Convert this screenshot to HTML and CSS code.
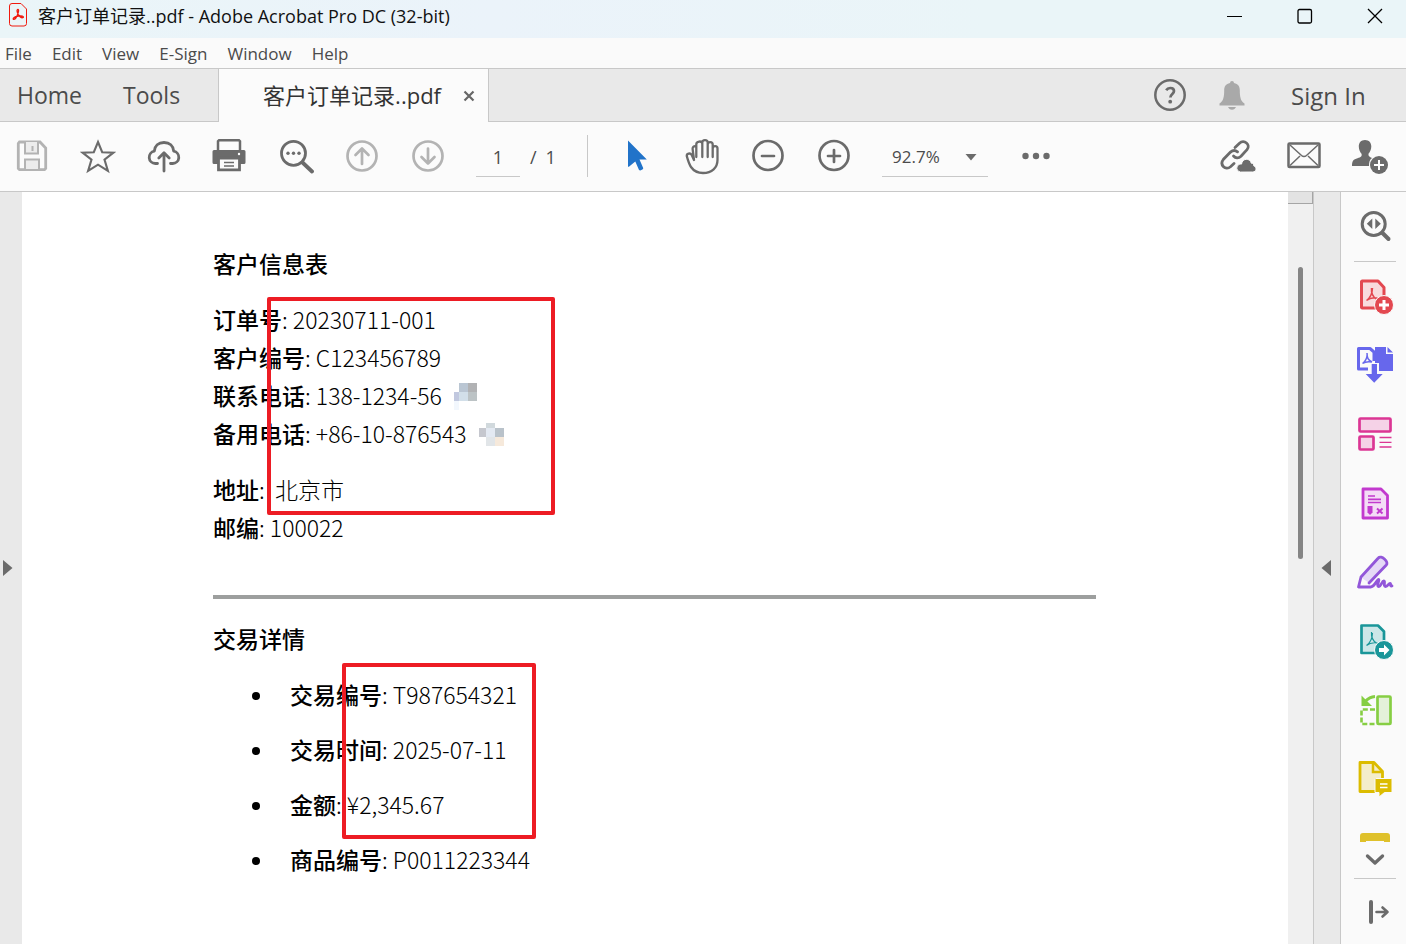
FILE: index.html
```html
<!DOCTYPE html>
<html lang="en">
<head>
<meta charset="utf-8">
<title>客户订单记录..pdf - Adobe Acrobat Pro DC (32-bit)</title>
<link rel="stylesheet" href="styles.css">
</head>
<body>
<div class="app">
  <header class="titlebar">
    <svg class="app-icon" width="20" height="26" viewBox="0 0 20 26" fill="none" stroke="#f01a0e"><path d="M4 1.500h9l5.500 5.500v14.500a2.500 2.500 0 0 1-2.500 2.500h-12a2.500 2.500 0 0 1-2.500-2.500v-17.500a2.500 2.500 0 0 1 2.500-2.500z"/><path stroke-width="1.300" d="M10 7.500c-1.600 0-.9 2.700.2 4.800 1.200 2 3.200 3.600 4.500 3.400 1.500-.4.600-2-2.200-1.900-2.600.1-6.500 1.300-7.200 2.600-.5 1.500 1.500 1.400 2.700-.5 1.400-2.100 3.600-8.400 2-8.400z"/></svg>
    <h1 class="title">客户订单记录..pdf - Adobe Acrobat Pro DC (32-bit)</h1>
    <div class="window-buttons">
      <button aria-label="Minimize"><svg width="16" height="16" viewBox="0 0 16 16"><path d="M0 8.500h15" stroke="#000"/></svg></button>
      <button aria-label="Maximize"><svg width="16" height="16" viewBox="0 0 16 16"><rect x="1" y="1.500" width="13.500" height="13.500" rx="1.500" fill="none" stroke="#000" stroke-width="1.300"/></svg></button>
      <button aria-label="Close"><svg width="16" height="16" viewBox="0 0 16 16"><path d="M1 1l14 14M15 1L1 15" stroke="#000" stroke-width="1.300"/></svg></button>
    </div>
  </header>

  <nav class="menubar" aria-label="Menu">
    <button>File</button><button>Edit</button><button>View</button><button>E-Sign</button><button>Window</button><button>Help</button>
  </nav>

  <div class="tabs">
    <div class="tabs-main"><button>Home</button><button>Tools</button></div>
    <div class="tab-active">
      <button class="tab-name">客户订单记录..pdf</button>
      <button class="tab-close" aria-label="Close tab"><svg width="12" height="12" viewBox="0 0 12 12"><path d="M1.500 1.500l9 9M10.500 1.500l-9 9" stroke="#666" stroke-width="2.200"/></svg></button>
    </div>
    <div class="tabs-account">
      <button aria-label="Help"><svg width="34" height="34" viewBox="0 0 34 34" fill="none" stroke="#6b6b6b"><circle cx="17" cy="17" r="14.700" stroke-width="2.500"/><path d="M13.200 12.200c1-1.600 2.300-2.200 4-2.200 2.300 0 3.800 1.300 3.800 3.100 0 2.700-3.600 3-3.600 6.300" stroke-width="2.700"/><circle cx="17.200" cy="23.700" r="1.900" fill="#6b6b6b" stroke="none"/></svg></button>
      <button aria-label="Notifications"><svg width="26" height="34" viewBox="0 0 26 34" fill="#a9a9a9"><path d="M11 5a2 2 0 0 1 4 0c4.200.8 5.800 3.600 5.800 7.200 0 6.200.7 10.800 4.700 13.300v2H.5v-2c4-2.500 4.700-7.100 4.700-13.300C5.200 8.600 6.800 5.800 11 5zM9 29h8c-.8 1.600-2 2.700-4 2.700S9.800 30.600 9 29z"/></svg></button>
      <button class="sign-in">Sign In</button>
    </div>
  </div>

  <div class="toolbar" role="toolbar" aria-label="Page tools">
    <button disabled aria-label="Save"><svg viewBox="0 0 36 38" fill="none" stroke="#b3b3b3" stroke-width="2.800"><path d="M5.500 5h20.500l5.700 6v20.500l-1.200 1.200h-25l-1.200-1.200v-25z"/><path fill="#ececec" stroke-width="2" d="M11 5v11.500h13V5M11 32V22.500h14V32"/><path d="M18.500 9v5" stroke-width="2"/></svg></button>
    <button aria-label="Star"><svg viewBox="0 0 36 38" fill="none" stroke="#6b6b6b" stroke-width="2.100"><path d="M18 5l4.200 10.200 11.200.4-8.900 7 3.400 11.300L18 27.700 8.100 33.900l3.400-11.300-8.900-7 11.200-.4z"/></svg></button>
    <button aria-label="Share to cloud"><svg viewBox="0 0 36 38" fill="none" stroke="#6b6b6b" stroke-width="2.800" stroke-linecap="round" stroke-linejoin="round"><path d="M11.500 26.500H9.300a6.200 6.200 0 0 1-1-12.300C8.700 8.700 12.400 5.500 18 5.500s9.300 3.200 9.700 8.700a6.200 6.200 0 0 1-1 12.300h-2.200"/><path d="M18 34V16M12.800 21l5.200-5.200 5.200 5.200"/></svg></button>
    <button aria-label="Print"><svg viewBox="0 0 36 38" fill="none" stroke="#6b6b6b"><path d="M6 14V4.200L7 3.300h20l1 .9V14" stroke-width="2.500"/><path d="M2 13h30a1.500 1.500 0 0 1 1.500 1.500v11a1.500 1.500 0 0 1-1.500 1.500H2a1.500 1.500 0 0 1-1.500-1.500v-11A1.500 1.500 0 0 1 2 13z" fill="#6b6b6b" stroke="none"/><path d="M6.500 21h21v11.800h-21z" fill="#fbfbfb" stroke-width="2.800"/><path d="M12 25.500h10M12 29h10" stroke-width="1.500"/><circle cx="27" cy="17" r="1.200" fill="#fff" stroke="none"/></svg></button>
    <button aria-label="Find"><svg viewBox="0 0 36 38" fill="none" stroke="#6b6b6b"><circle cx="15.500" cy="16.300" r="12" stroke-width="2.800"/><path d="M24.500 25.500l9.500 9" stroke-width="3.800" stroke-linecap="round"/><g fill="#6b6b6b" stroke="none"><circle cx="10" cy="16.300" r="1.700"/><circle cx="15.500" cy="16.300" r="1.700"/><circle cx="21" cy="16.300" r="1.700"/></g></svg></button>
    <button disabled aria-label="Previous page"><svg viewBox="0 0 36 38" fill="none" stroke="#b3b3b3" stroke-width="2.700" stroke-linecap="round" stroke-linejoin="round"><circle cx="18" cy="19" r="14.500"/><path d="M18 27V12M11.500 18l6.500-6.500 6.500 6.500"/></svg></button>
    <button disabled aria-label="Next page"><svg viewBox="0 0 36 38" fill="none" stroke="#b3b3b3" stroke-width="2.700" stroke-linecap="round" stroke-linejoin="round"><circle cx="18" cy="19" r="14.500"/><path d="M18 11.500V26.500M11.500 20l6.500 6.500 6.500-6.500"/></svg></button>
    <div class="pager"><input type="text" value="1" aria-label="Page number"><span>/</span><span>1</span></div>
    <span class="separator"></span>
    <button aria-label="Select"><svg viewBox="0 0 36 38"><path d="M10 3.500L28.800 22.500h-7.300l3.700 8.600c.6 1.600-3.500 3.300-4.300 1.600l-3.600-8.200-6.400 5.200c-.5.300-.9.200-.9-.3z" fill="#2173c9"/></svg></button>
    <button aria-label="Hand"><svg viewBox="0 0 36 38" fill="none" stroke="#6b6b6b" stroke-width="2.300" stroke-linecap="round" stroke-linejoin="round"><path d="M10 23L7.600 17.800c-1.200-2.300-5.200-1.300-4.800 1.300C4 23.500 5 27 7 30c3 4.300 6.800 6 12 6 9 0 14.500-5.500 14.500-13V11.500c0-3.300-4.800-3.300-4.800 0V20M28.700 12V7.500c0-3.300-5-3.300-5 0V20M23.700 8V5.500c0-3.300-5.400-3.300-5.400 0V20M18.300 6.500c-.5-3-6-2.500-6 .8V20M12.300 9.500c-2.500-.8-3.700.5-3.700 2.300l1.400 11"/></svg></button>
    <button aria-label="Zoom out"><svg viewBox="0 0 36 38" fill="none" stroke="#6b6b6b" stroke-width="2.700" stroke-linecap="round"><circle cx="18" cy="18.500" r="14.500"/><path d="M12 19h12"/></svg></button>
    <button aria-label="Zoom in"><svg viewBox="0 0 36 38" fill="none" stroke="#6b6b6b" stroke-width="2.700" stroke-linecap="round"><circle cx="18" cy="18.500" r="14.500"/><path d="M12 19h12M18 13v12"/></svg></button>
    <div class="zoom"><select aria-label="Zoom level"><option>92.7%</option></select><svg class="zoom-arrow" width="12" height="8" viewBox="0 0 12 8"><path d="M.5 1h11L6 7.500z" fill="#6b6b6b"/></svg></div>
    <button aria-label="More tools"><svg viewBox="0 0 36 38" fill="#6b6b6b"><circle cx="7.500" cy="19" r="3.200"/><circle cx="18" cy="19" r="3.200"/><circle cx="28.500" cy="19" r="3.200"/></svg></button>
    <span class="spacer"></span>
    <button aria-label="Share link"><svg viewBox="0 0 36 38" fill="none" stroke="#6b6b6b" stroke-width="2.800" stroke-linecap="round"><path d="M15 10.500l4.500-4.300c4.500-4.200 11.600 1.500 7.500 6.500l-6 6.500c-2.500 2.400-5.500 2-7.500-.2"/><path d="M17.500 14.800c-2.200-1.800-4.700-1.800-7 .3L3.300 22.500c-4 5.200 2.200 11.500 7.200 7.200l3.500-3.200"/><path d="M20 35a4 4 0 0 1-.3-7.800c.8-.2 1.400-.2 1.800-.1.800-6 8.500-6.500 9.800-.9 2 0 2.500 1.200 2.500 2.700 3.200.7 3 6.100-.8 6.100z" fill="#6b6b6b" stroke="#fbfbfb" stroke-width="1"/></svg></button>
    <button aria-label="Email"><svg viewBox="0 0 36 38" fill="none" stroke="#6b6b6b"><rect x="2.500" y="6.500" width="31" height="23.500" rx="1" stroke-width="2.500"/><path d="M4 8l11.500 10.500q2.500 2 5 0L32 8M4 28.500l10-9.500M32 28.500L22 19" stroke-width="1.500"/></svg></button>
    <button aria-label="Share with people"><svg viewBox="0 0 36 38" fill="#6b6b6b"><path d="M13 3c4 0 6.300 2.800 6.300 6.500 0 3.400-1.500 5.500-2.800 7.300-.5 2.200 1 3.200 3.500 4.200-2.500 1.800-3 4.500-3 8H0c0-5.300 1.500-6.700 5.500-7.800 3.500-.8 4.700-2 4-4.400C8.200 15 6.800 13 6.800 9.500 6.800 5.800 9 3 13 3z"/><circle cx="27" cy="28" r="9"/><path d="M27 23v10M22 28h10" stroke="#fff" stroke-width="2"/></svg></button>
  </div>

  <div class="workspace">
    <button class="rail rail-left" aria-label="Show navigation pane"><svg width="10" height="16" viewBox="0 0 10 16"><path d="M0 0l9.500 8L0 16z" fill="#6b6b6b"/></svg></button>
    <main class="page">
      <h2>客户信息表</h2>
      <section class="customer">
        <p><b>订单号</b>: 20230711-001<br><b>客户编号</b>: C123456789<br><b>联系电话</b>: 138-1234-56<br><b>备用电话</b>: +86-10-876543</p>
        <p><b>地址</b>:&nbsp; 北京市<br><b>邮编</b>: 100022</p>
        <svg class="mask mask-phone" width="23" height="27" viewBox="0 0 23 27" shape-rendering="crispEdges"><path fill="#bac6d3" d="M5 0h9v9H5z"/><path fill="#b1b2b4" d="M14 0h9v9h-9z"/><path fill="#c1c8df" d="M0 9h5v9H0z"/><path fill="#d2dfe9" d="M5 9h9v9H5z"/><path fill="#bcc3c5" d="M14 9h9v9h-9z"/><path fill="#f2f7fd" d="M0 18h5v9H0z"/></svg>
        <svg class="mask mask-backup" width="25" height="23" viewBox="0 0 25 23" shape-rendering="crispEdges"><path fill="#c5c7ce" d="M0 5h7v9H0z"/><path fill="#d1d9dd" d="M7 0h9v5H7z"/><path fill="#e3e9f2" d="M7 5h9v9H7z"/><path fill="#e1e5e8" d="M7 14h9v9H7z"/><path fill="#b9c2ca" d="M16 5h9v9h-9z"/><path fill="#f6e9db" d="M16 14h9v9h-9z"/></svg>
        <div class="highlight highlight-customer"></div>
      </section>
      <hr>
      <h2>交易详情</h2>
      <section class="trade">
        <ul>
          <li><span><b>交易编号</b>: T987654321</span></li>
          <li><span><b>交易时间</b>: 2025-07-11</span></li>
          <li><span><b>金额</b>: ¥2,345.67</span></li>
          <li><span><b>商品编号</b>: P0011223344</span></li>
        </ul>
        <div class="highlight highlight-trade"></div>
      </section>
    </main>
    <div class="scrollbar"><div class="scroll-split"></div><div class="scroll-thumb"></div></div>
    <button class="rail rail-right" aria-label="Hide tools pane"><svg width="10" height="16" viewBox="0 0 10 16"><path d="M10 0L.5 8l9.500 8z" fill="#6b6b6b"/></svg></button>
    <aside class="tools">
      <button aria-label="Search tools"><svg viewBox="0 0 42 40" fill="#6b6b6b"><circle cx="19.700" cy="18" r="11.500" fill="none" stroke="#6b6b6b" stroke-width="3"/><path d="M28.500 27l6 6" stroke="#6b6b6b" stroke-width="4" stroke-linecap="round"/><path d="M18.300 12.500v10.500l-5.500-5.200zM21.300 12.500v10.500l5.500-5.200z"/></svg></button>
      <span class="rule"></span>
      <div class="tool-list">
        <button aria-label="Create PDF"><svg viewBox="0 0 42 40" fill="none" stroke="#e34850"><path d="M8 4h16l6 6.500V31H8l-.5-.5v-26z" fill="#f8dbdd" stroke-width="3" stroke-linejoin="round"/><path d="M17.500 11c-.4 5 .6 8.500 5 11M12.500 23.500c4-3 5.800-6.500 6-12.500M12.500 23.500c3-2.500 6-3.300 11-2.500" stroke-width="1.500"/><circle cx="30" cy="28" r="9.500" fill="#e34850" stroke="#fafafa"/><path d="M30 23v10M25 28h10" stroke="#fff" stroke-width="3"/></svg></button>
        <button aria-label="Export PDF"><svg viewBox="0 0 42 40" fill="none" stroke="#6767ec"><path d="M14 23H4.500V2.500H16L20 6v9" stroke-width="3" stroke-linejoin="round"/><path d="M13 7c0 5 1 7 5 9M8.500 17.500c3.500-2.500 4.500-5 4.700-9M8.500 17.500c3-2 5-2.500 9.500-1.500" stroke-width="1.500"/><path d="M21 1h11v7h7v17H25V17h-4zM33.500 1l5.500 5.500h-5.500z" fill="#6767ec" stroke="none"/><path d="M17.700 18h5.300v10h5.700l-8.500 8.700-8.500-8.700h6z" fill="#6767ec" stroke="none"/></svg></button>
        <button aria-label="Organize pages"><svg viewBox="0 0 42 40" fill="#f5d2e7" stroke="#db3694"><rect x="5.500" y="3.500" width="31" height="13" rx="1" stroke-width="2.700"/><rect x="5.500" y="21.500" width="14" height="13" rx="1" stroke-width="2.700"/><path d="M25.500 22.500h12M25.500 27.300h12M25.500 32h12" stroke-width="1.300"/></svg></button>
        <button aria-label="Prepare form"><svg viewBox="0 0 42 40" fill="none" stroke="#c239ce"><path d="M9 5h18l6.500 6.500V34H9z" fill="#f4dcf6" stroke-width="2.800" stroke-linejoin="round"/><path d="M14 12h7M14 15.300h13M14 18.500h13" stroke-width="1.700"/><path d="M13.500 22h5v6.500L16 31l-2.500-2.500z" fill="#c239ce" stroke="none"/><path d="M23 24.500l5.500 5M28.500 24.500l-5.500 5" stroke-width="2"/></svg></button>
        <button aria-label="Fill and sign"><svg viewBox="0 0 42 40" fill="none" stroke="#9256d9" stroke-width="2.800" stroke-linejoin="round" stroke-linecap="round"><path d="M8 25L25 5c1.500-2.500 9 4 7.500 6L15 30z" fill="#e5d9f6" stroke="none"/><path d="M15 30l17.300-18c2.600-3-5-10.500-8-7L7 24 4.500 34H17c4-1 6-7.500 7.500-7.500s-2.800 7 .5 7c2 0 3-5.500 4.800-5.500s-.8 5.500 1.700 5.500 3-3 4.500-3-.5 3 2 2.500"/></svg></button>
        <button aria-label="Send for comments"><svg viewBox="0 0 42 40" fill="none" stroke="#1a9699"><path d="M7.500 3.500H24l6 6V31H7.500z" fill="#cce7e8" stroke-width="2.700" stroke-linejoin="round"/><path d="M17.500 10c-.4 5 .6 8.500 5 11M12.500 23.500c4-3 5.800-6.500 6-12.500M12.500 23.500c3-2.500 6-3.300 11-2.500" stroke-width="1.200"/><circle cx="30" cy="28" r="9.500" fill="#1a9699" stroke="#fafafa"/><path d="M25 26h5v-3.500l5.500 5.500-5.500 5.500V30h-5z" fill="#fff" stroke="none"/></svg></button>
        <button aria-label="Rotate pages"><svg viewBox="0 0 42 40" fill="none" stroke="#86ce43"><rect x="23.500" y="5.500" width="13" height="27.500" rx="1" fill="#e4f1d9" stroke-width="2.700"/><path d="M21 5.500c-5 .3-7 2-10 5" stroke-width="3"/><path d="M7.500 4.500V15h10.500z" fill="#86ce43" stroke="none"/><path d="M21 18.500H7.500v14.500H21" stroke-width="2.600" stroke-dasharray="5 2.200"/></svg></button>
        <button aria-label="Comment"><svg viewBox="0 0 42 40" fill="none" stroke="#dcbc00"><path d="M6 2.500h14l8.500 9V31.500H6z" fill="#f4edca" stroke-width="2.800" stroke-linejoin="round"/><path d="M19 3v9h9" stroke-width="2.500"/><path d="M22 18.500h15l1 1v13H30.500L25 37v-4.500h-4v-13z" fill="#dcbc00" stroke="#fafafa" stroke-width="1"/><path d="M26 24h7.500M26 27.500h7.500" stroke="#fff" stroke-width="1.500"/></svg></button>
        <button aria-label="Scan"><svg viewBox="0 0 42 40" fill="#dfc12b"><path d="M6 13V7a3 3 0 0 1 3-3h24a3 3 0 0 1 3 3v6h-6v-1H12v1z"/></svg></button>
      </div>
      <button class="more" aria-label="Show more tools"><svg width="20" height="14" viewBox="0 0 20 14" fill="none" stroke="#6b6b6b" stroke-width="3.400" stroke-linecap="round" stroke-linejoin="round"><path d="M2.500 3l7.500 7 7.500-7"/></svg></button>
      <span class="rule"></span>
      <button class="collapse" aria-label="Collapse tools pane"><svg width="22" height="24" viewBox="0 0 22 24" fill="none" stroke="#6b6b6b" stroke-linecap="round"><path d="M3 2v20" stroke-width="4"/><path d="M8.500 12h11M14.500 7.500l5 4.500-5 4.500" stroke-width="2.600" stroke-linejoin="round"/></svg></button>
    </aside>
  </div>
</div>
</body>
</html>
```
FILE: styles.css
```css
* { box-sizing: border-box; }

body {
  margin: 0;
  font-family: "Open Sans", "Noto Sans CJK SC", sans-serif;
  color: #4b4b4b;
  background: #fafafa;
}

button {
  margin: 0;
  padding: 0;
  border: 0;
  background: none;
  font: inherit;
  color: inherit;
}

svg { display: block; flex: none; }

.app { display: flex; flex-direction: column; height: 100vh; overflow: hidden; }

.titlebar {
  display: flex;
  align-items: center;
  flex: none;
  height: 38px;
  padding: 0 8px 6px;
  background: linear-gradient(90deg, #eaf5f8, #ebf3fa 35%, #eaf5f8 70%);
}
.app-icon { margin-top: -2px; }
.title { margin: 0 0 0 10px; font-size: 18px; line-height: 24px; font-weight: 400; color: #111; }
.window-buttons { display: flex; gap: 24px; margin-left: auto; }
.window-buttons button { display: flex; justify-content: center; width: 46px; }

.menubar {
  display: flex;
  flex: none;
  gap: 20px;
  height: 31px;
  padding: 0 5px;
  border-bottom: 1px solid #c8c8c8;
  font-size: 17px;
  line-height: 31px;
}

.tabs { display: flex; flex: none; height: 53px; font-size: 23px; background: #e9e9e9; }
.tabs-main {
  display: flex;
  align-items: center;
  gap: 41px;
  width: 219px;
  padding-left: 17px;
  border-right: 1px solid #c8c8c8;
  border-bottom: 1px solid #c8c8c8;
}
.tab-active {
  display: flex;
  align-items: center;
  justify-content: flex-end;
  gap: 22px;
  width: 270px;
  padding-right: 13px;
  border-right: 1px solid #c8c8c8;
  background: #fbfbfb;
}
.tab-name { padding-bottom: 4px; font-size: 22px; color: #333; }
.tabs-account {
  display: flex;
  flex: 1;
  align-items: center;
  justify-content: flex-end;
  padding-right: 34px;
  border-bottom: 1px solid #c8c8c8;
}
.tabs-account button + button { margin-left: 32px; }
.tabs-account .sign-in.sign-in {
  width: 81px;
  margin-left: 46px;
  font-size: 24px;
  font-weight: 500;
  text-align: left;
  white-space: nowrap;
}

.toolbar {
  display: flex;
  flex: none;
  gap: 30px;
  padding: 15px 18px 14px 14px;
  border-bottom: 1px solid #c8c8c8;
  background: #fbfbfb;
}
.toolbar button { flex: none; width: 36px; height: 38px; }
.pager { display: flex; width: 81px; font-size: 18px; line-height: 40px; }
.pager input {
  width: 44px;
  height: 40px;
  margin-right: 10px;
  padding: 0;
  border: 0;
  border-bottom: 1px solid #c8c8c8;
  background: none;
  font: inherit;
  color: inherit;
  text-align: center;
}
.pager span + span { margin-left: 9px; }
.separator { width: 1px; height: 42px; margin: -2px 0; background: #c8c8c8; }
.zoom { position: relative; width: 106px; height: 40px; }
.zoom select {
  width: 100%;
  height: 40px;
  padding: 0 10px;
  border: 0;
  border-bottom: 1px solid #c8c8c8;
  border-radius: 0;
  background: none;
  appearance: none;
  font: inherit;
  font-size: 17px;
  color: inherit;
}
.zoom-arrow { position: absolute; right: 11px; top: 16px; pointer-events: none; }
.spacer { flex: 1; margin: 0 -30px; }

.workspace { display: flex; flex: 1; min-height: 0; }
.rail { display: flex; align-items: center; flex: none; background: #e9e9e9; }
.rail-left { width: 22px; padding-left: 3px; }
.rail-right { width: 28px; padding-left: 7px; border: solid #c8c8c8; border-width: 0 1px; }

.page {
  flex: 1;
  min-width: 0;
  overflow: hidden;
  padding: 52px 192px 0 191px;
  background: #fff;
  color: #000;
  font-family: "Noto Sans CJK SC", sans-serif;
  font-size: 23px;
  font-weight: 300;
  line-height: 38px;
}
.page h2 { margin: 0 0 18px; font-size: 23px; line-height: 38px; font-weight: 500; }
.page b { font-weight: 500; }
.page p { margin: 0 0 18px; }
.page hr { height: 4px; margin: 49px 0 20px; border: 0; background: #9d9f9e; }
.customer, .trade { position: relative; }
.customer p:last-of-type { margin: 0; }
.trade ul { display: grid; gap: 17px; margin: 0; padding: 0 0 0 39px; list-style: none; }
.trade li { display: flex; align-items: center; gap: 30px; }
.trade li::before { content: ""; width: 8px; height: 8px; margin-top: 4px; border-radius: 50%; background: #000; }

.mask, .highlight { position: absolute; }
.mask-phone { left: 241px; top: 83px; }
.mask-backup { left: 266px; top: 123px; }
.highlight { border: 4px solid #ed1c24; border-radius: 2px; }
.highlight-customer { left: 54px; top: -3px; width: 288px; height: 218px; }
.highlight-trade { left: 129px; top: -12px; width: 194px; height: 176px; }

.scrollbar { flex: none; width: 25px; background: #f0f0f0; }
.scroll-split { height: 12px; border: solid #a5a5a5; border-width: 0 1px 1px 0; background: #e3e3e3; }
.scroll-thumb { width: 5px; height: 292px; margin: 63px 0 0 10px; border-radius: 3px; background: #858585; }

.tools {
  display: flex;
  flex-direction: column;
  flex: none;
  width: 65px;
  padding: 14px 10px 0 13px;
  background: #fafafa;
}
.tools button { flex: none; width: 42px; height: 40px; }
.rule { flex: none; height: 1px; background: #c8c8c8; }
.tools > .rule:first-of-type { margin: 15px 0; }
.tool-list { display: flex; flex: 1; flex-direction: column; gap: 29px; min-height: 0; overflow: hidden; }
.tools .more { display: grid; place-items: center; height: 36px; }
.tools > .rule:last-of-type { margin: 0; }
.tools .collapse { display: grid; place-items: center; height: 65px; padding: 0 0 0 8px; }
```
